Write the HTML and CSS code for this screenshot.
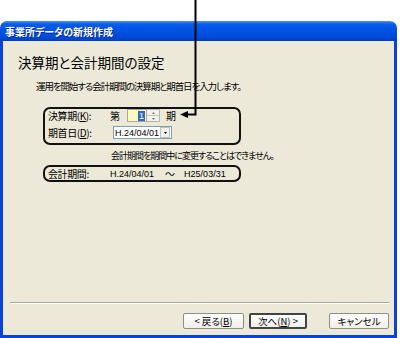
FILE: index.html
```html
<!DOCTYPE html>
<html>

<head>
  <meta charset="UTF-8">
  <title>事業所データの新規作成</title>
  <link rel="stylesheet" href="styles.css">
</head>

<body>
  <div class="page">
    <div class="window">
      <div class="titlebar">事業所データの新規作成</div>

      <div class="client">
        <h1 class="heading">決算期と会計期間の設定</h1>
        <p class="desc">運用を開始する会計期間の決算期と期首日を入力します。</p>

        <!-- 決算期 / 期首日 -->
        <div class="box box-input">
          <div class="row">
            <span class="label">決算期(<u>K</u>):</span>
            <span class="dai">第</span>
            <span class="spin">
              <span class="spin-field"><span class="sel">1</span></span>
              <span class="spin-btns">
                <span class="spin-btn"><svg width="3" height="2" viewBox="0 0 3 2"><path d="M0 2H3L1.5 0Z" fill="#777"/></svg></span>
                <span class="spin-btn"><svg width="3" height="2" viewBox="0 0 3 2"><path d="M0 0H3L1.5 2Z" fill="#777"/></svg></span>
              </span>
            </span>
            <span class="ki">期</span>
          </div>
          <div class="row">
            <span class="label">期首日(<u>D</u>):</span>
            <span class="combo">
              <span class="combo-text">H.24/04/01</span>
              <span class="combo-btn"><svg width="3" height="2" viewBox="0 0 3 2"><path d="M0 0H3L1.5 2Z" fill="#000"/></svg></span>
            </span>
          </div>
        </div>

        <p class="note">会計期間を期間中に変更することはできません。</p>

        <div class="box box-period">
          <span class="label">会計期間:</span>
          <span class="date">H.24/04/01</span>
          <span class="tilde">～</span>
          <span class="date">H25/03/31</span>
        </div>

        <div class="spacer"></div>
        <div class="separator"></div>

        <div class="buttons">
          <button class="btn">&lt; 戻る(<u>B</u>)</button>
          <button class="btn btn-default">次へ(<u>N</u>) &gt;</button>
          <button class="btn btn-cancel">キャンセル</button>
        </div>
      </div>
    </div>

    <!-- annotation arrow drawn over the screenshot -->
    <svg class="callout" width="400" height="338" viewBox="0 0 400 338">
      <path d="M195.5 0V114.5H186" fill="none" stroke="#000" stroke-width="2"/>
      <path d="M180 114.5L188 111V118Z" fill="#000"/>
    </svg>
  </div>
</body>

</html>
```

FILE: styles.css
```css
body {
  margin: 0;
  background: #fff;
  font-family: "Noto Sans CJK JP", "Liberation Sans", sans-serif;
  font-feature-settings: "palt";
  color: #000;
}

.page {
  position: relative;
  width: 400px;
  height: 338px;
  overflow: hidden;
}

.window {
  margin-top: 21px;
  width: 397px;
  height: 317px;
  display: flex;
  flex-direction: column;
}

.titlebar {
  height: 20px;
  line-height: 21px;
  padding-left: 5px;
  border-radius: 7px 7px 0 0;
  background: linear-gradient(#4a94f8 0, #0a5ce9 3px, #0054e3 45%, #0049d8 85%, #003dc4 100%);
  color: #fff;
  font-size: 10px;
  font-weight: bold;
  text-shadow: 1px 1px 0 #0a2a88;
}

.client {
  flex: 1;
  display: flex;
  flex-direction: column;
  background: #ece9d8;
  border: 3px solid #0842dc;
  border-top: none;
}

.heading {
  margin: 13px 0 0 15px;
  font-size: 13.5px;
  line-height: 16px;
  font-weight: normal;
}

.desc {
  margin: 9px 0 0 33px;
  font-size: 9.5px;
  letter-spacing: -1.1px;
  line-height: 14px;
}

.box {
  margin-left: 40px;
  width: 191px;
  border: 2px solid #111;
  border-radius: 7px;
  font-size: 10px;
}

.box-input {
  margin-top: 14px;
  padding: 0 0 4px 3px;
  height: 30px;
  display: flex;
  flex-direction: column;
  gap: 4px;
}

.row {
  height: 13px;
  display: flex;
  align-items: center;
}

.label {
  width: 62px;
  flex: none;
  letter-spacing: -0.4px;
}

.dai {
  width: 17px;
}

.spin {
  display: flex;
  height: 13px;
}

.spin-field {
  width: 17px;
  height: 11px;
  background: #fffbbf;
  border: 1px solid #a9a89c;
  display: flex;
  justify-content: flex-end;
  align-items: center;
  padding-right: 1px;
}

.sel {
  background: #316ac5;
  color: #fff;
  font-family: "Liberation Sans", sans-serif;
  font-size: 9px;
  line-height: 10px;
  padding: 0 1px;
}

.spin-btns {
  width: 12px;
  display: flex;
  flex-direction: column;
  border: 1px solid #b8b6a8;
  border-left: none;
}

.spin-btn {
  flex: 1;
  display: flex;
  align-items: center;
  justify-content: center;
  background: #f2f1ea;
  border-bottom: 1px solid #c9c7ba;
}

.spin-btn:last-child {
  border-bottom: none;
}

.ki {
  margin-left: 6px;
}

.combo {
  margin-left: 3px;
  width: 57px;
  height: 11px;
  background: #fff;
  border: 1px solid #7f9db9;
  display: flex;
  align-items: center;
}

.combo-text {
  flex: 1;
  padding-left: 1px;
  font-family: "Liberation Sans", sans-serif;
  font-size: 9px;
}

.combo-btn {
  width: 8px;
  height: 9px;
  margin-right: 1px;
  background: #f1f0ea;
  border: 1px solid #c2c0b2;
  display: flex;
  align-items: center;
  justify-content: center;
}

.note {
  margin: 4px 0 0 108px;
  font-size: 9px;
  letter-spacing: -1px;
  line-height: 13px;
}

.box-period {
  margin-top: 3px;
  height: 13px;
  padding-left: 3px;
  display: flex;
  align-items: center;
}

.date {
  width: 60px;
  font-family: "Liberation Sans", sans-serif;
  font-size: 9px;
}

.tilde {
  width: 21px;
}

.spacer {
  flex: 1;
}

.separator {
  margin: 0 5px 0 7px;
  border-top: 1px solid #aca899;
  border-bottom: 1px solid #fff;
}

.buttons {
  display: flex;
  justify-content: flex-end;
  margin: 9px 5px 6px 0;
}

.btn {
  width: 61px;
  height: 16px;
  padding: 0;
  margin-left: 5px;
  font-family: "Noto Sans CJK JP", "Liberation Sans", sans-serif;
  font-feature-settings: "palt";
  font-size: 9.5px;
  line-height: 12px;
  color: #000;
  background: linear-gradient(#fefefd, #f0efe8);
  border: 1px solid #8e8d86;
  border-radius: 2px;
}

.btn-default {
  width: 58px;
  border: 2px solid #444;
}

.btn-cancel {
  width: 60px;
  margin-left: 22px;
}

.callout {
  position: absolute;
  left: 0;
  top: 0;
}
```
